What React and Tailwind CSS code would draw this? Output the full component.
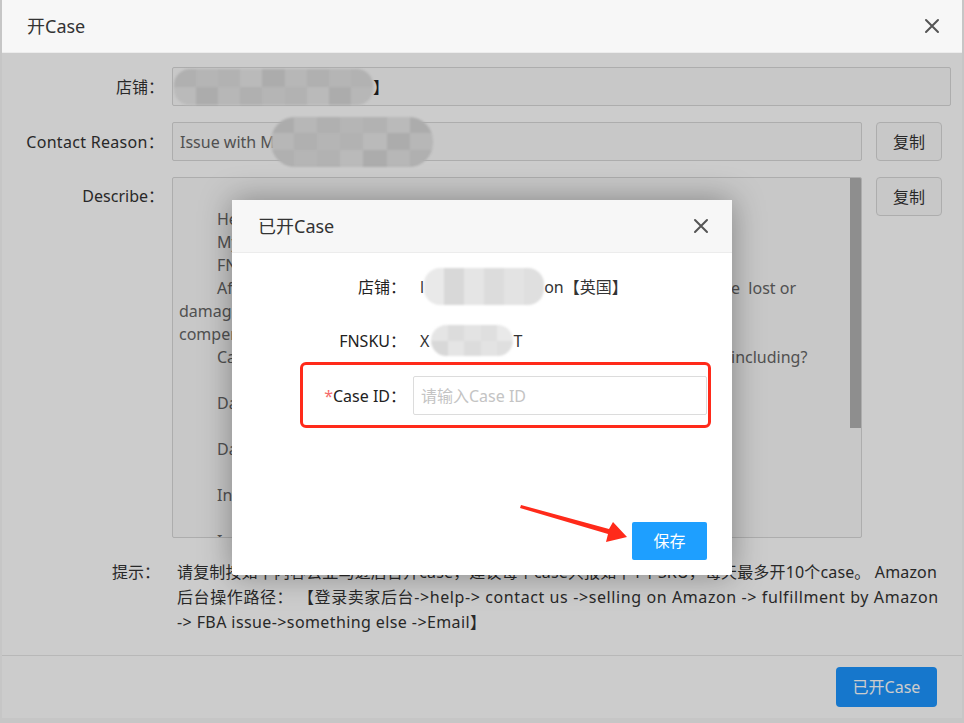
import React from 'react';

const shades = ['bg-[#dcdcdc]', 'bg-[#e5e5e5]', 'bg-[#d8d8d8]', 'bg-[#e9e9e9]', 'bg-[#dfdfdf]', 'bg-[#e3e3e3]'];

// blurred/pixelated patch used to hide private text
const Mosaic = ({ className, cols = 8, rows = 2, offset = 0 }) => (
  <span className={`inline-grid overflow-hidden rounded-[16px] blur-[1px] align-middle ${className}`}
    style={{ gridTemplateColumns: `repeat(${cols}, 1fr)` }}>
    {Array.from({ length: cols * rows }).map((_, i) => (
      <span key={i} className={shades[(i * 5 + offset) % shades.length]} />
    ))}
  </span>
);

const CloseIcon = () => (
  <svg width="16" height="16" viewBox="0 0 16 16" className="text-[#555]">
    <path d="M2 2 L14 14 M14 2 L2 14" stroke="currentColor" strokeWidth="2" strokeLinecap="round" />
  </svg>
);

const describeLines = [
  { t: '' },
  { t: 'Hello,', indent: true },
  { t: 'My store has some inventory problems,', indent: true },
  { t: 'FNSKU: X0000000000000T', indent: true },
  { t: 'After checking the reports, we found that the inventory was', indent: true, right: 'e  lost or' },
  { t: 'damaged in your warehouse, but we have not received any' },
  { t: 'compensation for it, please check for us.' },
  { t: 'Can you tell us the details of the reimbursement,', indent: true, right: 'including?' },
  { t: '' },
  { t: 'Date of the inventory adjustment:', indent: true },
  { t: '' },
  { t: 'Date of the reimbursement:', indent: true },
  { t: '' },
  { t: 'Inventory quantity:', indent: true },
  { t: '' },
  { t: 'Is there anything else we need to do?', indent: true },
];

export default function App() {
  return (
    <div className="w-[964px] h-[723px] bg-[#c6c6c6] overflow-hidden font-['Noto_Sans','Noto_Sans_CJK_SC',sans-serif] text-[16px] text-[#333]">
      <div className="relative ml-[2px] w-[960px] h-[718px] bg-white flex flex-col">
        {/* header */}
        <div className="h-[53px] shrink-0 bg-[#f7f7f7] border-b border-[#ececec] flex items-center justify-between pl-[25px] pr-[22px]">
          <span className="text-[18px] text-[#333]">开Case</span>
          <CloseIcon />
        </div>

        {/* body */}
        <div className="flex-1 flex flex-col pt-[14px] pr-[11px]">
          <div className="flex items-center h-[39px]">
            <div className="w-[162px] text-right shrink-0">店铺：</div>
            <div className="ml-[8px] flex-1 h-[39px] border border-[#d9d9d9] rounded-[2px] bg-[#fafafa] flex items-center pl-[1px]">
              <Mosaic className="w-[199px] h-[36px]" cols={9} rows={2} />
              <span className="text-[#222]">】</span>
            </div>
          </div>

          <div className="flex items-center h-[39px] mt-[16px]">
            <div className="w-[162px] text-right shrink-0 tracking-[0.3px]">Contact Reason：</div>
            <div className="ml-[8px] w-[690px] h-[39px] border border-[#d9d9d9] rounded-[2px] bg-[#fafafa] flex items-center pl-[7px] text-[#666]">
              <span>Issue with M</span>
              <Mosaic className="w-[162px] h-[50px] -ml-[4px] rounded-[24px]" cols={7} rows={3} offset={2} />
            </div>
            <button className="ml-[14px] w-[66px] h-[39px] border border-[#d9d9d9] rounded-[4px] bg-[#fafafa] text-[#333]">复制</button>
          </div>

          <div className="flex items-start mt-[16px]">
            <div className="w-[162px] text-right shrink-0 leading-[39px]">Describe：</div>
            <div className="ml-[8px] w-[690px] h-[361px] border border-[#d9d9d9] rounded-[2px] bg-[#fafafa] flex overflow-hidden">
              <div className="flex-1 pl-[6px] pt-[7px] text-[#666] leading-[23px] overflow-hidden">
                {describeLines.map((l, i) => (
                  <div key={i} className="flex h-[23px] whitespace-pre">
                    <span className={`w-[552px] shrink-0 overflow-hidden ${l.indent ? 'pl-[38px]' : ''}`}>{l.t}</span>
                    {l.right && <span>{l.right}</span>}
                  </div>
                ))}
              </div>
              <div className="w-[11px] shrink-0">
                <div className="h-[250px] bg-[#b2b2b2]" />
              </div>
            </div>
            <button className="ml-[14px] w-[66px] h-[39px] border border-[#d9d9d9] rounded-[4px] bg-[#fafafa] text-[#333]">复制</button>
          </div>

          <div className="flex items-start mt-[22px] leading-[25px]">
            <div className="w-[158px] text-right shrink-0">提示：</div>
            <div className="ml-[17px] w-[775px] whitespace-pre">
              <div className="tracking-[0.15px]">请复制按如下内容去亚马逊后台开case，建议每个case只报如下1个SKU，每天最多开10个case。 Amazon</div>
              <div className="tracking-[0.6px]">后台操作路径： 【登录卖家后台-&gt;help-&gt; contact us -&gt;selling on Amazon -&gt; fulfillment by Amazon</div>
              <div className="tracking-[0.4px]">-&gt; FBA issue-&gt;something else -&gt;Email】</div>
            </div>
          </div>
        </div>

        {/* footer */}
        <div className="h-[63px] shrink-0 border-t border-[#e6e6e6] flex items-center justify-end pr-[25px]">
          <button className="w-[101px] h-[40px] bg-[#1c95ff] rounded-[4px] text-white">已开Case</button>
        </div>

        {/* mask of the nested modal */}
        <div className="absolute left-0 right-0 top-[53px] bottom-0 bg-black/20" />

        {/* nested modal */}
        <div className="absolute left-[230px] top-[200px] w-[500px] h-[375px] bg-white rounded-[2px] shadow-[0_0_32px_rgba(0,0,0,0.35)] flex flex-col">
          <div className="h-[53px] shrink-0 bg-[#f7f7f7] border-b border-[#ececec] flex items-center justify-between pl-[26px] pr-[23px]">
            <span className="text-[18px] text-[#333]">已开Case</span>
            <CloseIcon />
          </div>

          <div className="relative flex-1 flex flex-col pt-[14px]">
            <div className="flex items-center h-[39px]">
              <div className="w-[174px] text-right shrink-0 text-[#222]">店铺：</div>
              <div className="ml-[7px] pl-[7px] flex items-center text-[#333]">
                <span>l</span>
                <Mosaic className="w-[120px] h-[37px]" cols={6} rows={2} offset={3} />
                <span>on【英国】</span>
              </div>
            </div>

            <div className="flex items-center h-[39px] mt-[15px]">
              <div className="w-[174px] text-right shrink-0 text-[#222]">FNSKU：</div>
              <div className="ml-[7px] pl-[7px] flex items-center text-[#333]">
                <span>X</span>
                <Mosaic className="w-[82px] h-[31px] ml-[2px]" cols={5} rows={2} offset={1} />
                <span>T</span>
              </div>
            </div>

            <div className="flex items-center h-[39px] mt-[16px]">
              <div className="w-[174px] text-right shrink-0 text-[#222]">
                <span className="text-[#f56c6c]">*</span>Case ID：
              </div>
              <input
                className="ml-[7px] w-[294px] h-[39px] border border-[#dcdcdc] rounded-[2px] px-[7px] outline-none placeholder:text-[#c4c4c4]"
                placeholder="请输入Case ID"
              />
            </div>

            <div className="mt-auto flex justify-end pr-[25px] pb-[15px]">
              <button className="w-[75px] h-[38px] bg-[#1e9fff] rounded-[2px] text-white">保存</button>
            </div>

            {/* annotation: red box */}
            <div className="absolute left-[68px] top-[109px] w-[411px] h-[66px] border-[3px] border-[#ff2a1a] rounded-[6px]" />

            {/* annotation: arrow */}
            <svg className="absolute left-[268px] top-[242px]" width="140" height="55" viewBox="0 0 140 55">
              <polygon points="21,10 109,34 113,27 127,42 106,47 108,39 20,13" fill="#ff2a1a" />
            </svg>
          </div>
        </div>
      </div>
    </div>
  );
}
